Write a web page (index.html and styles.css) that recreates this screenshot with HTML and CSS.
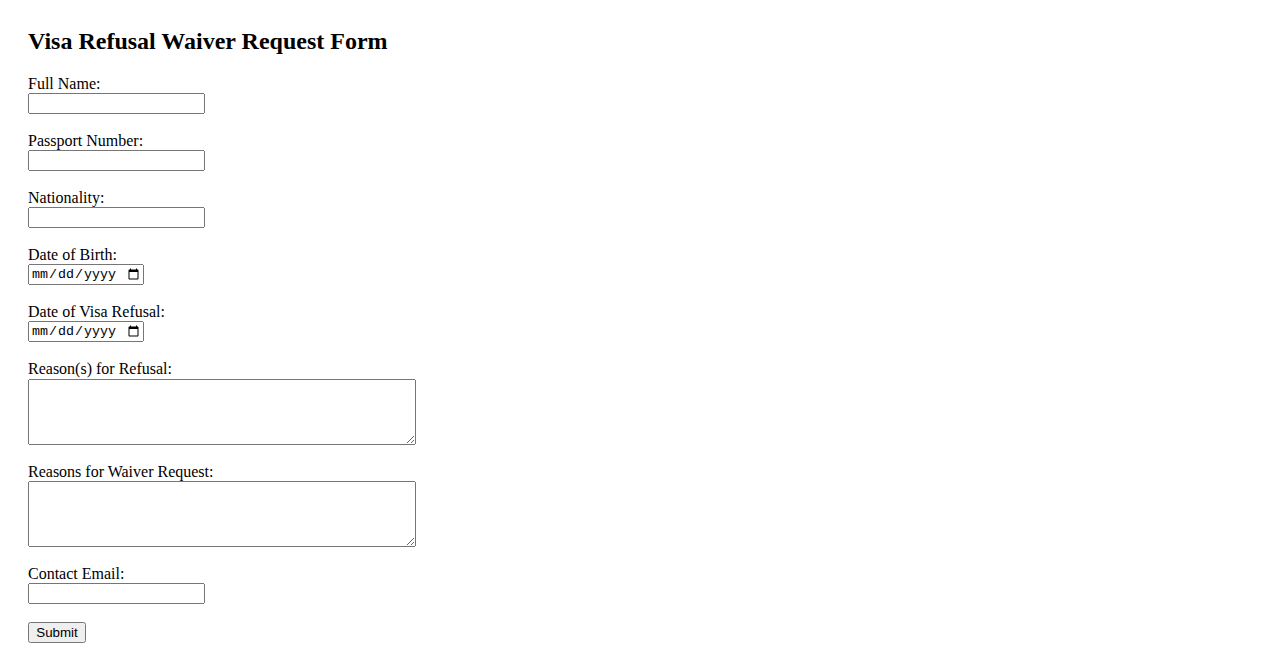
FILE: index.html
```html
<!DOCTYPE html>
<html lang="en">
<head>
<meta charset="utf-8">
<title>Visa Refusal Waiver Request Form</title>
<link rel="stylesheet" href="styles.css">
</head>
<body>
<div class="page">
<h2 class="title">Visa Refusal Waiver Request Form</h2>
<form class="form">
<label for="fullName">Full Name:</label><br>
<input class="text-input" type="text" id="fullName" name="fullName"><br><br>
<label for="passport">Passport Number:</label><br>
<input class="text-input" type="text" id="passport" name="passport"><br><br>
<label for="nationality">Nationality:</label><br>
<input class="text-input" type="text" id="nationality" name="nationality"><br><br>
<label for="dob">Date of Birth:</label><br>
<input class="date-input" type="date" id="dob" name="dob"><br><br>
<label for="refusalDate">Date of Visa Refusal:</label><br>
<input class="date-input" type="date" id="refusalDate" name="refusalDate"><br><br>
<label for="refusalReasons">Reason(s) for Refusal:</label><br>
<textarea class="area" id="refusalReasons" name="refusalReasons"></textarea><br><br>
<label for="waiverReasons">Reasons for Waiver Request:</label><br>
<textarea class="area" id="waiverReasons" name="waiverReasons"></textarea><br><br>
<label for="email">Contact Email:</label><br>
<input class="text-input" type="email" id="email" name="email"><br><br>
<input class="submit" type="submit" value="Submit">
</form>
</div>
</body>
</html>
```

FILE: styles.css
```css
html, body {
  background: #ffffff;
}
body {
  margin: 8px;
  font-family: "Liberation Serif", "Times New Roman", serif;
  font-size: 16px;
  line-height: 18px;
  color: #000000;
}
.page {
  padding: 20px;
}
.title {
  margin: 0 0 20px 0;
  font-size: 24px;
  line-height: 27px;
  font-weight: bold;
}
.form {
  margin: 0;
}
.text-input {
  box-sizing: border-box;
  width: 177px;
  height: 21px;
  font-family: "Liberation Sans", Arial, sans-serif;
  font-size: 13.333px;
}
.date-input {
  box-sizing: border-box;
  width: 116px;
  height: 21px;
  font-family: "Liberation Mono", monospace;
  font-size: 13.333px;
}
.area {
  box-sizing: border-box;
  width: 388px;
  height: 66px;
  margin-top: 0.5px;
  vertical-align: top;
  font-family: "Liberation Mono", monospace;
  font-size: 13.333px;
}
.submit {
  box-sizing: border-box;
  width: 58px;
  height: 21px;
  padding: 1px 6px;
  font-family: "Liberation Sans", Arial, sans-serif;
  font-size: 13.333px;
}
```
